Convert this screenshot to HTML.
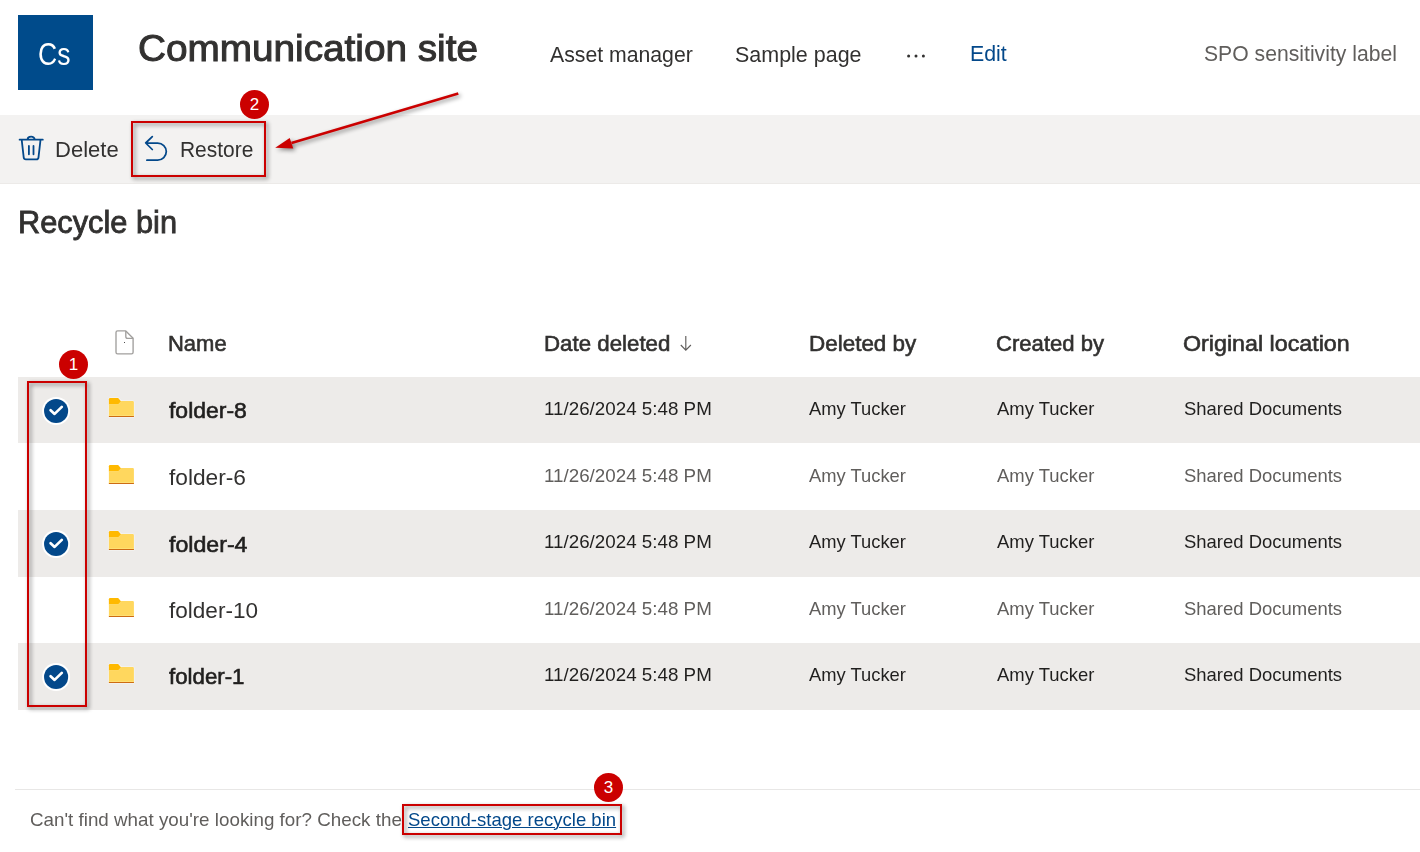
<!DOCTYPE html>
<html><head><meta charset="utf-8"><title>Recycle bin</title>
<style>
html,body{margin:0;padding:0;background:#fff;}
body{width:1420px;height:852px;position:relative;overflow:hidden;font-family:"Liberation Sans",sans-serif;color:#323130;}
.t{position:absolute;white-space:nowrap;line-height:1;margin:0;padding:0;transform-origin:0 0;}
.a{position:absolute;}
.c{position:absolute;width:29.6px;height:29.6px;border-radius:50%;background:#cb0000;color:#fff;font-size:17px;line-height:29.6px;text-align:center;}
.rb{position:absolute;border:2px solid #cb0000;box-sizing:border-box;filter:drop-shadow(2.8px 2.8px 2px rgba(0,0,0,.48));}
</style></head><body>
<div class="a" style="left:18px;top:15px;width:75px;height:75px;background:#004b8b;"></div>
<svg class="a" style="left:905px;top:52px" width="22" height="8"><circle cx="3.6" cy="4" r="1.5" fill="#323130"/><circle cx="11" cy="4" r="1.5" fill="#323130"/><circle cx="18.4" cy="4" r="1.5" fill="#323130"/></svg>
<div class="a" style="left:0;top:115px;width:1420px;height:68px;background:#f3f2f1;border-bottom:1px solid #eceae8;"></div>
<svg class="a" style="left:14px;top:128px" width="40" height="40" fill="none" stroke="#03488a" stroke-width="1.8" stroke-linecap="round" stroke-linejoin="round"><path d="M5.6 11.7H28.8M13.6 11.4A3.55 2.7 0 0 1 20.7 11.4M7.7 11.9L9.7 29.3Q9.9 31.3 11.9 31.3H22.4Q24.3 31.3 24.5 29.3L26.5 11.9M14.9 18V26.3M19.5 18V26.3"/></svg>
<svg class="a" style="left:136px;top:128px" width="40" height="40" fill="none" stroke="#03488a" stroke-width="1.75" stroke-linecap="round" stroke-linejoin="round"><path d="M16.3 8.6L9.7 15L16.3 21.5M9.9 15H21.7A8.6 8.6 0 0 1 21.7 32.2H10.9"/></svg>
<div class="a" style="left:18px;top:377.0px;width:1402px;height:65.8px;background:#edebe9;"></div>
<div class="a" style="left:18px;top:510.1px;width:1402px;height:66.6px;background:#edebe9;"></div>
<div class="a" style="left:18px;top:643.3px;width:1402px;height:66.6px;background:#edebe9;"></div>
<svg class="a" style="left:104px;top:322px" width="40" height="40" fill="none" stroke="#a19f9d" stroke-width="1.35" stroke-linejoin="round"><path d="M13.6 8.9H21.8L29.1 16.2V30.3Q29.1 31.9 27.5 31.9H13.6Q12 31.9 12 30.3V10.5Q12 8.9 13.6 8.9Z"/><path d="M21.8 8.9V14.4Q21.8 16.3 23.7 16.3H29.1"/><rect x="20" y="20.1" width="0.9" height="0.9" fill="#222" stroke="none"/></svg>
<svg class="a" style="left:666px;top:326px" width="40" height="40" fill="none" stroke="#605e5c" stroke-width="1.15"><path d="M19.8 10.1V24M14.8 19L19.8 24.1L24.9 19"/></svg>
<svg class="a" style="left:100px;top:388.0px" width="44" height="40"><path d="M8.4 11.2Q8.4 9.6 10 9.6H18.4L21.6 12.6H32.9Q34.4 12.6 34.4 14.1V29.4H8.4Z" fill="#fff" fill-opacity=".6"/><path d="M8.9 11.3Q8.9 10.1 10.1 10.1H18.2L21.1 13.4L18.3 16.6H8.9Z" fill="#ffb900"/><path d="M8.9 16.3H18.1L21.3 13.1H32.8Q33.9 13.1 33.9 14.2V28.9H8.9Z" fill="#ffd75e"/><rect x="8.9" y="27.9" width="25" height="1" fill="#c8600c"/><rect x="8.9" y="27.1" width="25" height="0.8" fill="#ffe57d"/></svg>
<svg class="a" style="left:36px;top:390.9px" width="40" height="40"><circle cx="20.1" cy="20" r="14" fill="#fff"/><circle cx="20.1" cy="20" r="12.05" fill="#03488a"/><path d="M14.6 19.2L18.6 22.9L25.8 15.9" fill="none" stroke="#fff" stroke-width="2.7" stroke-linecap="round" stroke-linejoin="round"/></svg>
<svg class="a" style="left:100px;top:454.6px" width="44" height="40"><path d="M8.4 11.2Q8.4 9.6 10 9.6H18.4L21.6 12.6H32.9Q34.4 12.6 34.4 14.1V29.4H8.4Z" fill="#fff" fill-opacity=".6"/><path d="M8.9 11.3Q8.9 10.1 10.1 10.1H18.2L21.1 13.4L18.3 16.6H8.9Z" fill="#ffb900"/><path d="M8.9 16.3H18.1L21.3 13.1H32.8Q33.9 13.1 33.9 14.2V28.9H8.9Z" fill="#ffd75e"/><rect x="8.9" y="27.9" width="25" height="1" fill="#c8600c"/><rect x="8.9" y="27.1" width="25" height="0.8" fill="#ffe57d"/></svg>
<svg class="a" style="left:100px;top:521.1px" width="44" height="40"><path d="M8.4 11.2Q8.4 9.6 10 9.6H18.4L21.6 12.6H32.9Q34.4 12.6 34.4 14.1V29.4H8.4Z" fill="#fff" fill-opacity=".6"/><path d="M8.9 11.3Q8.9 10.1 10.1 10.1H18.2L21.1 13.4L18.3 16.6H8.9Z" fill="#ffb900"/><path d="M8.9 16.3H18.1L21.3 13.1H32.8Q33.9 13.1 33.9 14.2V28.9H8.9Z" fill="#ffd75e"/><rect x="8.9" y="27.9" width="25" height="1" fill="#c8600c"/><rect x="8.9" y="27.1" width="25" height="0.8" fill="#ffe57d"/></svg>
<svg class="a" style="left:36px;top:524.0px" width="40" height="40"><circle cx="20.1" cy="20" r="14" fill="#fff"/><circle cx="20.1" cy="20" r="12.05" fill="#03488a"/><path d="M14.6 19.2L18.6 22.9L25.8 15.9" fill="none" stroke="#fff" stroke-width="2.7" stroke-linecap="round" stroke-linejoin="round"/></svg>
<svg class="a" style="left:100px;top:587.8px" width="44" height="40"><path d="M8.4 11.2Q8.4 9.6 10 9.6H18.4L21.6 12.6H32.9Q34.4 12.6 34.4 14.1V29.4H8.4Z" fill="#fff" fill-opacity=".6"/><path d="M8.9 11.3Q8.9 10.1 10.1 10.1H18.2L21.1 13.4L18.3 16.6H8.9Z" fill="#ffb900"/><path d="M8.9 16.3H18.1L21.3 13.1H32.8Q33.9 13.1 33.9 14.2V28.9H8.9Z" fill="#ffd75e"/><rect x="8.9" y="27.9" width="25" height="1" fill="#c8600c"/><rect x="8.9" y="27.1" width="25" height="0.8" fill="#ffe57d"/></svg>
<svg class="a" style="left:100px;top:654.3px" width="44" height="40"><path d="M8.4 11.2Q8.4 9.6 10 9.6H18.4L21.6 12.6H32.9Q34.4 12.6 34.4 14.1V29.4H8.4Z" fill="#fff" fill-opacity=".6"/><path d="M8.9 11.3Q8.9 10.1 10.1 10.1H18.2L21.1 13.4L18.3 16.6H8.9Z" fill="#ffb900"/><path d="M8.9 16.3H18.1L21.3 13.1H32.8Q33.9 13.1 33.9 14.2V28.9H8.9Z" fill="#ffd75e"/><rect x="8.9" y="27.9" width="25" height="1" fill="#c8600c"/><rect x="8.9" y="27.1" width="25" height="0.8" fill="#ffe57d"/></svg>
<svg class="a" style="left:36px;top:657.2px" width="40" height="40"><circle cx="20.1" cy="20" r="14" fill="#fff"/><circle cx="20.1" cy="20" r="12.05" fill="#03488a"/><path d="M14.6 19.2L18.6 22.9L25.8 15.9" fill="none" stroke="#fff" stroke-width="2.7" stroke-linecap="round" stroke-linejoin="round"/></svg>
<div class="a" style="left:15px;top:789px;width:1405px;height:1px;background:#e8e7e6;"></div>
<div class="t" id="cs" style="left:37.69px;top:39.36px;font-size:31px;font-weight:normal;color:#fff;transform:scaleX(0.8543);">Cs</div>
<div class="t" id="title" style="left:137.95px;top:30.28px;font-size:37px;font-weight:normal;-webkit-text-stroke:1.00px currentColor;color:#323130;transform:scaleX(1.0464);">Communication site</div>
<div class="t" id="nav1" style="left:549.50px;top:43.95px;font-size:22.5px;font-weight:normal;color:#323130;transform:scaleX(0.9437);">Asset manager</div>
<div class="t" id="nav2" style="left:735.05px;top:43.95px;font-size:22.5px;font-weight:normal;color:#323130;transform:scaleX(0.9542);">Sample page</div>
<div class="t" id="edit" style="left:970.11px;top:42.95px;font-size:22.5px;font-weight:normal;color:#03488a;transform:scaleX(0.9459);">Edit</div>
<div class="t" id="spo" style="left:1203.76px;top:42.95px;font-size:22.5px;font-weight:normal;color:#605e5c;transform:scaleX(0.9409);">SPO sensitivity label</div>
<div class="t" id="del" style="left:55.04px;top:139.15px;font-size:22.5px;font-weight:normal;color:#323130;transform:scaleX(0.9790);">Delete</div>
<div class="t" id="res" style="left:180.14px;top:139.15px;font-size:22.5px;font-weight:normal;color:#323130;transform:scaleX(0.9303);">Restore</div>
<div class="t" id="rb" style="left:18.02px;top:206.66px;font-size:31px;font-weight:normal;-webkit-text-stroke:0.84px currentColor;color:#323130;transform:scaleX(0.9924);">Recycle bin</div>
<div class="t" id="h1" style="left:168.42px;top:333.25px;font-size:22.5px;font-weight:normal;-webkit-text-stroke:0.61px currentColor;color:#323130;transform:scaleX(0.9763);">Name</div>
<div class="t" id="h2" style="left:543.61px;top:333.25px;font-size:22.5px;font-weight:normal;-webkit-text-stroke:0.61px currentColor;color:#323130;transform:scaleX(0.9905);">Date deleted</div>
<div class="t" id="h3" style="left:809.30px;top:333.25px;font-size:22.5px;font-weight:normal;-webkit-text-stroke:0.61px currentColor;color:#323130;transform:scaleX(0.9972);">Deleted by</div>
<div class="t" id="h4" style="left:996.02px;top:333.25px;font-size:22.5px;font-weight:normal;-webkit-text-stroke:0.61px currentColor;color:#323130;transform:scaleX(0.9817);">Created by</div>
<div class="t" id="h5" style="left:1183.47px;top:333.25px;font-size:22.5px;font-weight:normal;-webkit-text-stroke:0.61px currentColor;color:#323130;transform:scaleX(1.0333);">Original location</div>
<div class="t" id="f1" style="left:30.01px;top:810.02px;font-size:19px;font-weight:normal;color:#605e5c;transform:scaleX(0.9893);">Can't find what you're looking for? Check the</div>
<div class="t" id="f2" style="left:408.22px;top:810.02px;font-size:19px;font-weight:normal;color:#03488a;transform:scaleX(0.9754);text-decoration:underline;text-decoration-thickness:1.3px;text-underline-offset:1.3px;">Second-stage recycle bin</div>
<div class="t" id="n0" style="left:169.30px;top:400.15px;font-size:22.5px;font-weight:normal;-webkit-text-stroke:0.61px currentColor;color:#201f1e;transform:scaleX(1.0197);">folder-8</div>
<div class="t" id="d0" style="left:543.61px;top:399.12px;font-size:19px;font-weight:normal;color:#201f1e;transform:scaleX(0.9886);">11/26/2024 5:48 PM</div>
<div class="t" id="a0" style="left:809.40px;top:399.12px;font-size:19px;font-weight:normal;color:#201f1e;transform:scaleX(0.9660);">Amy Tucker</div>
<div class="t" id="b0" style="left:997.00px;top:399.12px;font-size:19px;font-weight:normal;color:#201f1e;transform:scaleX(0.9700);">Amy Tucker</div>
<div class="t" id="s0" style="left:1183.53px;top:399.12px;font-size:19px;font-weight:normal;color:#201f1e;transform:scaleX(0.9720);">Shared Documents</div>
<div class="t" id="n1" style="left:169.30px;top:466.75px;font-size:22.5px;font-weight:normal;color:#323130;transform:scaleX(1.0093);">folder-6</div>
<div class="t" id="d1" style="left:543.61px;top:465.72px;font-size:19px;font-weight:normal;color:#605e5c;transform:scaleX(0.9886);">11/26/2024 5:48 PM</div>
<div class="t" id="a1" style="left:809.40px;top:465.72px;font-size:19px;font-weight:normal;color:#605e5c;transform:scaleX(0.9660);">Amy Tucker</div>
<div class="t" id="b1" style="left:997.00px;top:465.72px;font-size:19px;font-weight:normal;color:#605e5c;transform:scaleX(0.9700);">Amy Tucker</div>
<div class="t" id="s1" style="left:1183.53px;top:465.72px;font-size:19px;font-weight:normal;color:#605e5c;transform:scaleX(0.9720);">Shared Documents</div>
<div class="t" id="n2" style="left:169.30px;top:533.75px;font-size:22.5px;font-weight:normal;-webkit-text-stroke:0.61px currentColor;color:#201f1e;transform:scaleX(1.0289);">folder-4</div>
<div class="t" id="d2" style="left:543.61px;top:532.22px;font-size:19px;font-weight:normal;color:#201f1e;transform:scaleX(0.9886);">11/26/2024 5:48 PM</div>
<div class="t" id="a2" style="left:809.40px;top:532.22px;font-size:19px;font-weight:normal;color:#201f1e;transform:scaleX(0.9660);">Amy Tucker</div>
<div class="t" id="b2" style="left:997.00px;top:532.22px;font-size:19px;font-weight:normal;color:#201f1e;transform:scaleX(0.9700);">Amy Tucker</div>
<div class="t" id="s2" style="left:1183.53px;top:532.22px;font-size:19px;font-weight:normal;color:#201f1e;transform:scaleX(0.9720);">Shared Documents</div>
<div class="t" id="n3" style="left:169.30px;top:599.95px;font-size:22.5px;font-weight:normal;color:#323130;transform:scaleX(1.0023);">folder-10</div>
<div class="t" id="d3" style="left:543.61px;top:598.92px;font-size:19px;font-weight:normal;color:#605e5c;transform:scaleX(0.9886);">11/26/2024 5:48 PM</div>
<div class="t" id="a3" style="left:809.40px;top:598.92px;font-size:19px;font-weight:normal;color:#605e5c;transform:scaleX(0.9660);">Amy Tucker</div>
<div class="t" id="b3" style="left:997.00px;top:598.92px;font-size:19px;font-weight:normal;color:#605e5c;transform:scaleX(0.9700);">Amy Tucker</div>
<div class="t" id="s3" style="left:1183.53px;top:598.92px;font-size:19px;font-weight:normal;color:#605e5c;transform:scaleX(0.9720);">Shared Documents</div>
<div class="t" id="n4" style="left:169.30px;top:666.45px;font-size:22.5px;font-weight:normal;-webkit-text-stroke:0.61px currentColor;color:#201f1e;transform:scaleX(0.9895);">folder-1</div>
<div class="t" id="d4" style="left:543.61px;top:665.42px;font-size:19px;font-weight:normal;color:#201f1e;transform:scaleX(0.9886);">11/26/2024 5:48 PM</div>
<div class="t" id="a4" style="left:809.40px;top:665.42px;font-size:19px;font-weight:normal;color:#201f1e;transform:scaleX(0.9660);">Amy Tucker</div>
<div class="t" id="b4" style="left:997.00px;top:665.42px;font-size:19px;font-weight:normal;color:#201f1e;transform:scaleX(0.9700);">Amy Tucker</div>
<div class="t" id="s4" style="left:1183.53px;top:665.42px;font-size:19px;font-weight:normal;color:#201f1e;transform:scaleX(0.9720);">Shared Documents</div>
<div class="rb" style="left:131px;top:121px;width:135px;height:56px;"></div>
<div class="rb" style="left:27px;top:381px;width:60px;height:326px;"></div>
<div class="rb" style="left:402px;top:804px;width:220px;height:30.5px;"></div>
<div class="c" style="left:239.7px;top:89.7px;">2</div>
<div class="c" style="left:58.7px;top:349.7px;">1</div>
<div class="c" style="left:593.8px;top:772.8px;">3</div>
<svg class="a" style="left:260px;top:80px;filter:drop-shadow(2.8px 2.8px 2px rgba(0,0,0,.45));" width="220" height="90"><path d="M198.3 13.6L31.5 62.9" stroke="#cb0000" stroke-width="2.6" fill="none"/><path d="M15.2 67.7L29.7 57.9L33.3 68.6Z" fill="#cb0000"/></svg>
</body></html>
